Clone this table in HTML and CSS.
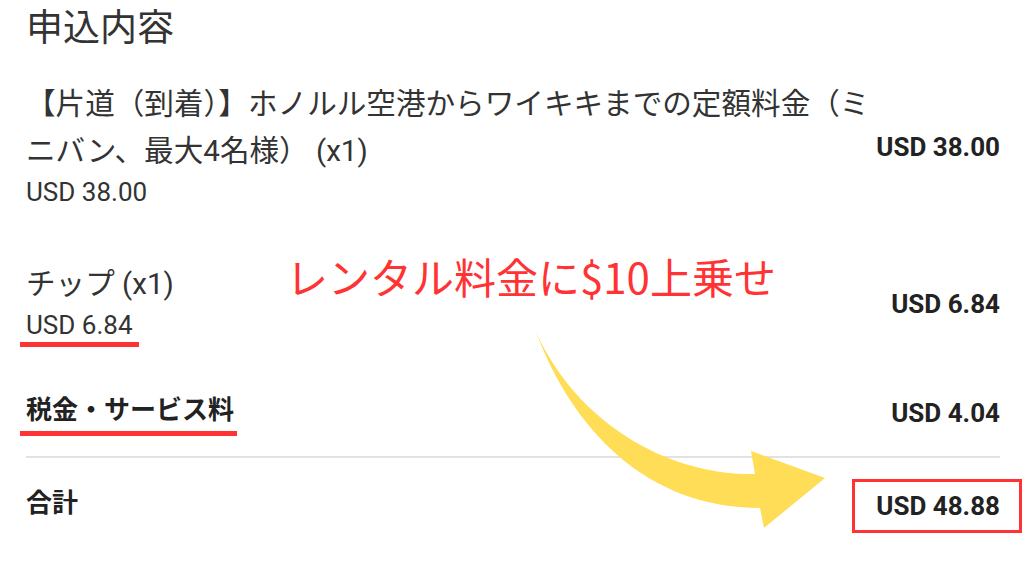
FILE: index.html
```html
<!DOCTYPE html>
<html lang="ja">
<head>
<meta charset="utf-8">
<title>申込内容</title>
<link rel="stylesheet" href="styles.css">
</head>
<body>
<div class="page">
  <h1 class="title">申込内容</h1>

  <div class="row row-first">
    <div class="left">
      <div class="name name-wrap">【片道（到着）】ホノルル空港からワイキキまでの定額料金（ミニバン、最大4名様） (x1)</div>
      <div class="sub">USD 38.00</div>
    </div>
    <div class="amount">USD 38.00</div>
  </div>

  <div class="row row-tip">
    <div class="left">
      <div class="name">チップ (x1)</div>
      <div class="sub"><span class="mark mark-sub">USD 6.84</span></div>
    </div>
    <div class="amount">USD 6.84</div>
  </div>

  <div class="row row-tax">
    <div class="left">
      <span class="label mark mark-label">税金・サービス料</span>
    </div>
    <div class="amount">USD 4.04</div>
  </div>

  <div class="divider"></div>

  <div class="row row-total">
    <div class="left">
      <span class="label">合計</span>
    </div>
    <div class="amount amount-boxed">USD 48.88</div>
  </div>
</div>

<div class="note">レンタル料金に$10上乗せ</div>

<svg class="arrow" width="1024" height="576" viewBox="0 0 1024 576" aria-hidden="true">
  <path d="M536,332 C573,431 648,508 760,508 L764,528 L825,478 L751,451 L755,474 C671,476 578,425 536,332 Z" fill="#FFDD57"/>
</svg>
</body>
</html>
```

FILE: styles.css
```css
html, body {
  margin: 0;
  padding: 0;
  background: #ffffff;
}

body {
  width: 1024px;
  height: 576px;
  overflow: hidden;
  position: relative;
  font-family: Roboto, "Noto Sans CJK JP", sans-serif;
  color: #333333;
}

.page {
  padding: 5px 24px 0 26px;
}

.title {
  margin: 0;
  font-size: 37px;
  font-weight: 400;
  line-height: 48px;
  color: #333333;
}

.row {
  display: flex;
  justify-content: space-between;
  align-items: center;
}

.row-first {
  margin-top: 28px;
}

.row-tip {
  margin-top: 52px;
}

.row-tax {
  margin-top: 43px;
}

.row-total {
  margin-top: 25px;
}

.left {
  display: flex;
  flex-direction: column;
  align-items: flex-start;
  min-width: 0;
}

.name {
  font-size: 29.6px;
  line-height: 47px;
  color: #333333;
}

.name-wrap {
  width: 850px;
}

.sub {
  font-size: 26px;
  line-height: 34px;
  color: #333333;
}

.mark {
  display: inline-block;
  border-bottom: 5px solid #ff3333;
  margin-left: -6px;
  padding-left: 6px;
}

.mark-sub {
  padding-right: 6px;
}

.label {
  font-size: 26px;
  font-weight: 700;
  line-height: 41px;
  color: #222222;
}

.mark-label {
  padding-right: 3px;
}

.amount {
  flex: none;
  font-size: 26px;
  font-weight: 700;
  line-height: 34px;
  color: #222222;
  white-space: nowrap;
}

.row-first .amount {
  margin-top: 4px;
}

.amount-boxed {
  line-height: 30px;
  border: 3px solid #ff3333;
  padding: 9px 19px 9px 21px;
  margin: -10px -22px -14px 0;
}

.divider {
  margin-top: 20px;
  height: 2px;
  background: #e2e2e2;
}

.note {
  position: absolute;
  left: 286px;
  top: 255px;
  font-family: "Noto Sans CJK JP", sans-serif;
  font-size: 42px;
  line-height: 1;
  color: #ff3333;
  white-space: nowrap;
}

.arrow {
  position: absolute;
  left: 0;
  top: 0;
  pointer-events: none;
}
```
